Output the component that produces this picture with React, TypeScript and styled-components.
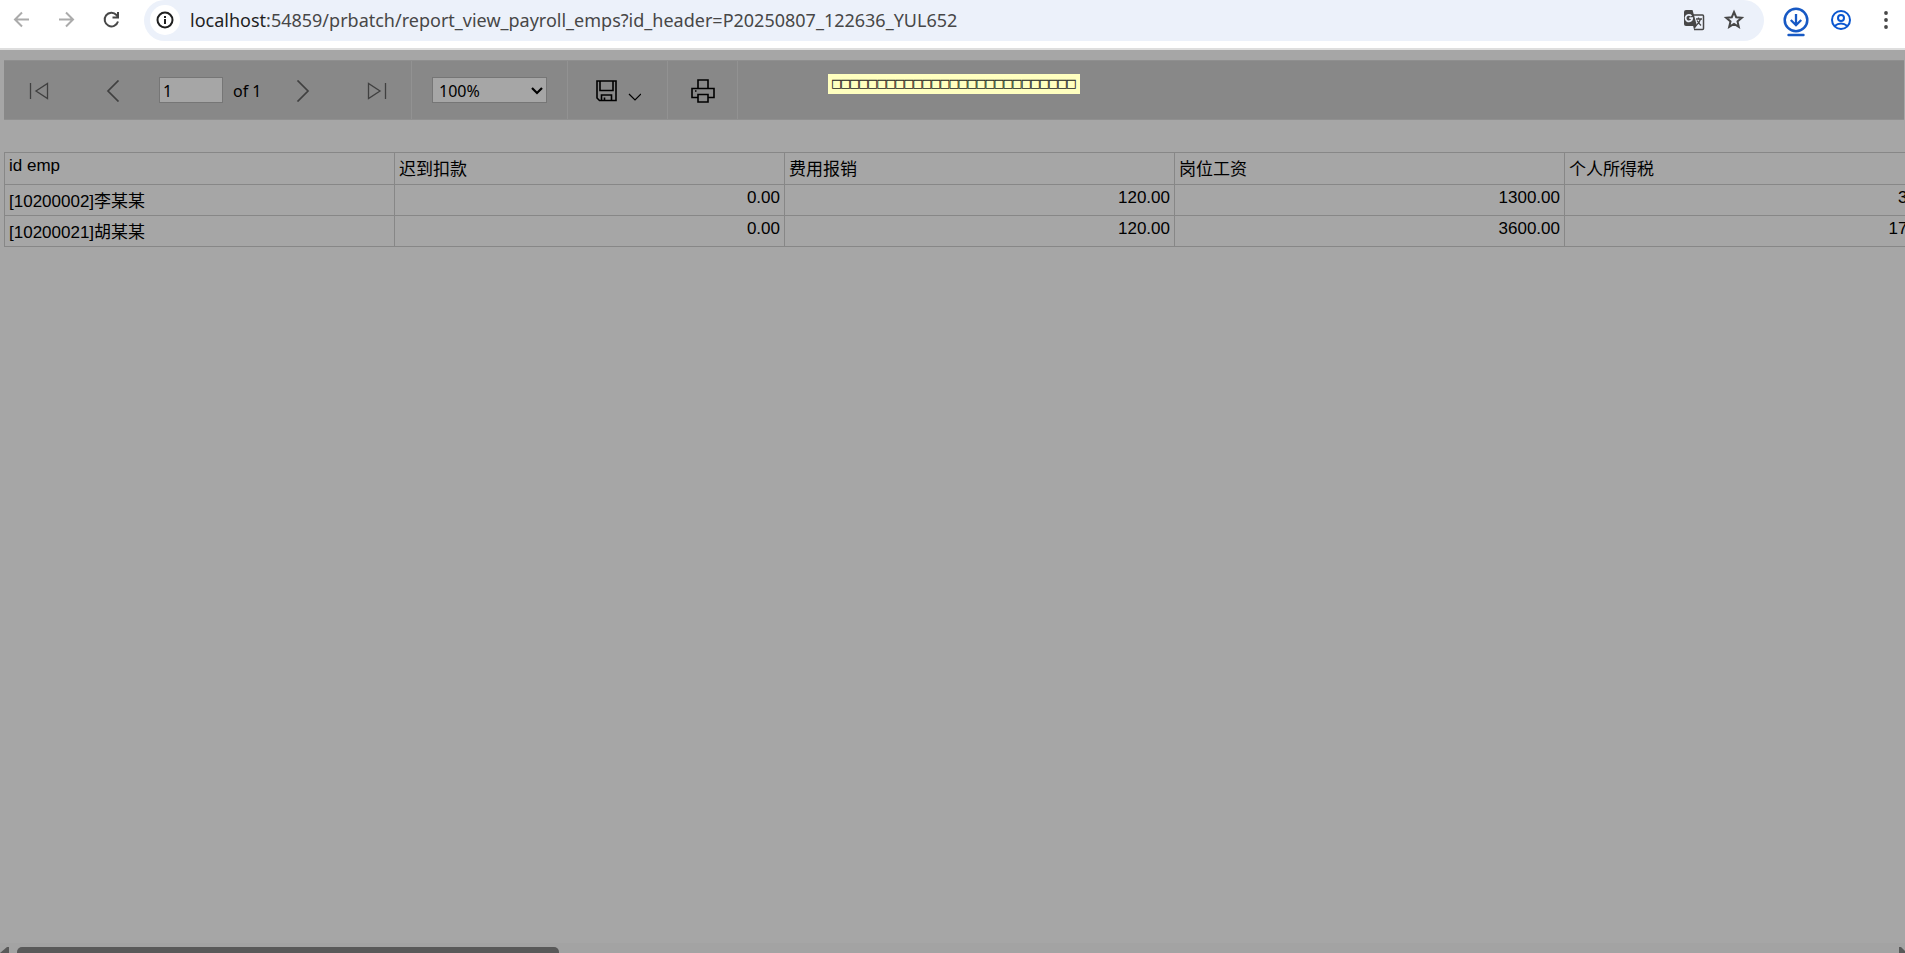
import React from 'react';
import styled, { createGlobalStyle } from 'styled-components';

const uiFont = '"Noto Sans", "Open Sans", sans-serif';
const cellFont = '"Liberation Sans", "Noto Sans CJK SC", sans-serif';

const GlobalStyle = createGlobalStyle`
  *, *::before, *::after { box-sizing: border-box; }
  body { margin: 0; background: #a6a6a6; }
`;

const Page = styled.div`
  display: flex;
  flex-direction: column;
  height: 100vh;
  overflow: hidden;
  background: #a6a6a6;
  color: #000;
  font-family: ${uiFont};
  font-size: 16px;
`;

const BrowserBar = styled.header`
  display: flex;
  align-items: flex-start;
  flex: none;
  height: 50px;
  background: #fff;
  border-bottom: 2px solid #dedede;
`;

const NavButtons = styled.nav`
  display: flex;
  gap: 21px;
  padding: 8px 20px 0 10px;
`;

const IconButton = styled.button<{ $w?: number; $h?: number; $color?: string }>`
  display: flex;
  align-items: center;
  justify-content: center;
  flex: none;
  width: ${(p) => p.$w ?? 24}px;
  height: ${(p) => p.$h ?? 24}px;
  padding: 0;
  border: 0;
  background: none;
  color: ${(p) => p.$color ?? '#474747'};
`;

const AddressBar = styled.div`
  display: flex;
  align-items: center;
  flex: 1;
  height: 41px;
  padding: 0 18px 2px 6px;
  border-radius: 21px;
  background: #ecf1fa;
`;

const SiteInfo = styled.button`
  display: flex;
  align-items: center;
  justify-content: center;
  width: 30px;
  height: 30px;
  margin-right: 10px;
  padding: 0;
  border: 0;
  border-radius: 50%;
  background: #fff;
  color: #1f1f1f;
`;

const Host = styled.label`
  color: #1f1f1f;
  font-size: 18px;
  line-height: 26px;
`;

const UrlInput = styled.input`
  flex: 1;
  min-width: 0;
  height: 26px;
  padding: 0;
  border: 0;
  outline: 0;
  background: none;
  color: #474747;
  font-family: ${uiFont};
  font-size: 18px;
`;

const AddressActions = styled.div`
  display: flex;
  gap: 16px;
`;

const BrowserActions = styled.div`
  display: flex;
  padding: 0 5px 0 18px;
`;

const Toolbar = styled.div`
  position: relative;
  display: flex;
  flex: none;
  height: 60px;
  margin: 10px 1px 32px 4px;
  border: 1px solid #8f8f8f;
  border-width: 1px 0;
  background: #888;
`;

const ToolGroup = styled.div<{ $w: number }>`
  display: flex;
  align-items: center;
  justify-content: center;
  flex: none;
  width: ${(p) => p.$w}px;
  border-right: 1px solid #929292;

  & > button, & > div > button { padding-top: 2px; }
`;

const PagingGroup = styled(ToolGroup)`
  justify-content: flex-start;
  padding-left: 20px;
`;

const ButtonPair = styled.div`
  display: flex;
  gap: 44px;
`;

const PageLabel = styled.label`
  display: flex;
  align-items: center;
  gap: 10px;
  margin: 0 26px 0 31px;
`;

const PageTotal = styled.span`
  padding-top: 2px;
  line-height: 24px;
`;

const PageInput = styled.input`
  width: 64px;
  height: 26px;
  padding: 2px 3px 0;
  border: 1px solid #767676;
  background: #a6a6a6;
  color: #000;
  font-family: ${uiFont};
  font-size: 16px;
`;

const ZoomField = styled.div`
  position: relative;
  display: flex;
`;

const ZoomSelect = styled.select`
  width: 115px;
  height: 26px;
  padding: 2px 6px 0;
  appearance: none;
  border: 1px solid #767676;
  border-radius: 0;
  background: #a6a6a6;
  color: #000;
  font-family: ${uiFont};
  font-size: 16px;
`;

const SelectArrow = styled.svg`
  position: absolute;
  top: 10px;
  right: 4px;
  pointer-events: none;
`;

const Hint = styled.div`
  position: absolute;
  top: 13px;
  left: 824px;
  height: 20px;
  padding: 0 4px;
  background: #ffffbf;
  color: #222;
  font-family: "DejaVu Sans Mono", monospace;
  font-size: 15px;
  line-height: 18px;
  white-space: nowrap;
`;

const Report = styled.main`
  flex: 1;
  min-height: 0;
  padding-left: 4px;
  overflow: hidden;
`;

const Table = styled.table`
  width: 1951px;
  table-layout: fixed;
  border-collapse: collapse;
  font-family: ${cellFont};
  font-size: 17px;
  line-height: 24px;
`;

const HeadCell = styled.th`
  height: 32px;
  padding: 0 4px;
  border: 1px solid #878787;
  font-weight: 400;
  text-align: left;
  vertical-align: top;
`;

const Cell = styled.td<{ $number?: boolean }>`
  height: 31px;
  padding: 0 4px;
  border: 1px solid #878787;
  text-align: ${(p) => (p.$number ? 'right' : 'left')};
  vertical-align: top;
`;

const CellText = styled.div<{ $cjk?: boolean }>`
  padding-top: ${(p) => (p.$cjk ? 5 : 1)}px;
`;

const ScrollTrack = styled.footer`
  display: flex;
  align-items: flex-end;
  justify-content: space-between;
  flex: none;
  height: 10px;
  background: #a3a3a3;
`;

const ScrollThumb = styled.div`
  width: 542px;
  height: 6px;
  margin: 0 auto 0 8px;
  border-radius: 5px 5px 0 0;
  background: #595959;
`;

const columns = ['id emp', '迟到扣款', '费用报销', '岗位工资', '个人所得税'];
const rows = [
  ['[10200002]李某某', '0.00', '120.00', '1300.00', '300.00'],
  ['[10200021]胡某某', '0.00', '120.00', '3600.00', '1700.00'],
];
const hasCjk = (text: string) => /[\u4e00-\u9fff]/.test(text);

const Stroke = ({ w, h, d, width = 2 }: { w: number; h: number; d: string; width?: number }) => (
  <svg width={w} height={h} viewBox={`0 0 ${w} ${h}`} fill="none" stroke="currentColor" strokeWidth={width}>
    <path d={d} />
  </svg>
);

export default function App() {
  return (
    <Page>
      <GlobalStyle />
      <BrowserBar>
        <NavButtons>
          <IconButton aria-label="Back" $color="#ababab">
            <Stroke w={24} h={24} d="M19 11.5H5.5M12 4.5l-7 7 7 7" />
          </IconButton>
          <IconButton aria-label="Forward" $color="#ababab">
            <Stroke w={24} h={24} d="M4 11.5h13.500M11 4.500l7 7-7 7" />
          </IconButton>
          <IconButton aria-label="Reload">
            <Stroke w={24} h={24} d="M18 13.500A6.800 6.800 0 1 1 16.500 7L18 8.500M18 4v5.500h-5.500" />
          </IconButton>
        </NavButtons>
        <AddressBar>
          <SiteInfo aria-label="Site information">
            <svg width="18" height="18" viewBox="0 0 18 18" fill="none" stroke="currentColor" strokeWidth="2">
              <circle cx="9" cy="9" r="7.500" />
              <path d="M9 8v5M9 5v2" />
            </svg>
          </SiteInfo>
          <Host htmlFor="url">localhost</Host>
          <UrlInput id="url" defaultValue=":54859/prbatch/report_view_payroll_emps?id_header=P20250807_122636_YUL652" />
          <AddressActions>
            <IconButton aria-label="Translate this page">
              <svg width="24" height="24" viewBox="0 0 24 24" fill="none">
                <path d="M11 7h9.500q1 0 1 1v12.500q0 1-1 1H12" stroke="currentColor" strokeWidth="1.500" />
                <path d="M4 2h6.500l4.500 16H4q-2 0-2-2V4q0-2 2-2z" fill="currentColor" />
                <path d="M11 17.500h4L12 21.500z" fill="currentColor" />
                <path d="M9.400 8A3.300 3.300 0 1 0 10.200 10.200H7.300" stroke="#ecf1fa" strokeWidth="1.800" />
                <path d="M14 11h6M16.500 9.500V11M18.500 11q-1 4-4 6M15 12.500q2 3 4 5" stroke="currentColor" strokeWidth="1.300" />
              </svg>
            </IconButton>
            <IconButton aria-label="Bookmark this page">
              <Stroke w={24} h={24} width={2} d="M12 4l2.200 5.200 5.600.500-4.300 3.700 1.300 5.500L12 16l-4.800 2.900 1.300-5.500-4.300-3.700 5.600-.500z" />
            </IconButton>
          </AddressActions>
        </AddressBar>
        <BrowserActions>
          <IconButton aria-label="Downloads" $w={28} $h={40} $color="#1759c4">
            <svg width="28" height="34" viewBox="0 -1 28 34" fill="none" stroke="currentColor">
              <circle cx="14" cy="16" r="11.300" strokeWidth="2.500" />
              <path d="M14 10v11M8.800 16l5.200 5.200 5.200-5.200" strokeWidth="2.300" />
              <path d="M6.500 31h15" strokeWidth="2.400" strokeLinecap="round" />
            </svg>
          </IconButton>
          <IconButton aria-label="Profile" $w={62} $h={40} $color="#0b57d0">
            <svg width="20" height="20" viewBox="0 0 20 20" fill="none" stroke="currentColor" strokeWidth="2">
              <circle cx="10" cy="10" r="9" />
              <circle cx="10" cy="8" r="3" />
              <path d="M3.500 16q6.500-5 13 0" />
            </svg>
          </IconButton>
          <IconButton aria-label="Browser menu" $w={28} $h={40}>
            <svg width="4" height="18" viewBox="0 0 4 18" fill="currentColor">
              <circle cx="2" cy="2" r="1.900" />
              <circle cx="2" cy="9" r="1.900" />
              <circle cx="2" cy="16" r="1.900" />
            </svg>
          </IconButton>
        </BrowserActions>
      </BrowserBar>

      <Toolbar role="toolbar" aria-label="Report">
        <PagingGroup $w={408}>
          <ButtonPair>
            <IconButton aria-label="First page" $w={30} $color="#404040">
              <Stroke w={20} h={18} width={1.3} d="M1.500 1v16M18.500 1.500v15L7 9z" />
            </IconButton>
            <IconButton aria-label="Previous page" $w={30} $color="#404040">
              <Stroke w={14} h={22} width={1.7} d="M12.500 0.500L2 11l10.500 10.500" />
            </IconButton>
          </ButtonPair>
          <PageLabel>
            <PageInput aria-label="Current page" defaultValue="1" />
            <PageTotal>of 1</PageTotal>
          </PageLabel>
          <ButtonPair>
            <IconButton aria-label="Next page" $w={30} $color="#404040">
              <Stroke w={14} h={22} width={1.7} d="M1.500 0.500L12 11 1.500 21.500" />
            </IconButton>
            <IconButton aria-label="Last page" $w={30} $color="#404040">
              <Stroke w={20} h={18} width={1.3} d="M18.500 1v16M1.500 1.500v15L13 9z" />
            </IconButton>
          </ButtonPair>
        </PagingGroup>
        <ToolGroup $w={156}>
          <ZoomField>
            <ZoomSelect aria-label="Zoom" defaultValue="100%">
              <option>100%</option>
            </ZoomSelect>
            <SelectArrow width="12" height="8" viewBox="0 0 12 8" fill="none" stroke="#000" strokeWidth="2.200">
              <path d="M1 1l5 5 5-5" />
            </SelectArrow>
          </ZoomField>
        </ToolGroup>
        <ToolGroup $w={100}>
          <IconButton aria-label="Export" $w={46} $h={26} $color="#000">
            <svg width="46" height="22" viewBox="-1 0 46 22" fill="none" stroke="currentColor">
              <path d="M1 1h19v19.500H3.500L1 18zM4 1v9.500h13V1M5.500 20.500V15H15.500v5.500M8.500 20V17.500" strokeWidth="1.600" />
              <path d="M33 14l6 6 6-6" strokeWidth="1.200" />
            </svg>
          </IconButton>
        </ToolGroup>
        <ToolGroup $w={70}>
          <IconButton aria-label="Print" $h={26} $color="#000">
            <svg width="24" height="24" viewBox="0 0 24 24" fill="none" stroke="currentColor" strokeWidth="1.600">
              <path d="M7 9.500V1h10v8.500M7 18.500H1v-9h22v9h-6M7 15.500h10V23H7z" />
              <path d="M4 12h1.500" />
            </svg>
          </IconButton>
        </ToolGroup>
        <Hint role="tooltip">{'□'.repeat(27)}</Hint>
      </Toolbar>

      <Report>
        <Table>
          <thead>
            <tr>
              {columns.map((name) => (
                <HeadCell key={name} scope="col">
                  <CellText $cjk={hasCjk(name)}>{name}</CellText>
                </HeadCell>
              ))}
            </tr>
          </thead>
          <tbody>
            {rows.map((row) => (
              <tr key={row[0]}>
                {row.map((value, i) => (
                  <Cell key={columns[i]} $number={i > 0}>
                    <CellText $cjk={hasCjk(value)}>{value}</CellText>
                  </Cell>
                ))}
              </tr>
            ))}
          </tbody>
        </Table>
      </Report>

      <ScrollTrack>
        <svg width="9" height="6" viewBox="0 0 9 6" fill="#595959"><path d="M9 0v6H0V6L7 0z" /></svg>
        <ScrollThumb />
        <svg width="6" height="6" viewBox="0 0 6 6" fill="#595959"><path d="M0 0h2l4 4v2H0z" /></svg>
      </ScrollTrack>
    </Page>
  );
}
